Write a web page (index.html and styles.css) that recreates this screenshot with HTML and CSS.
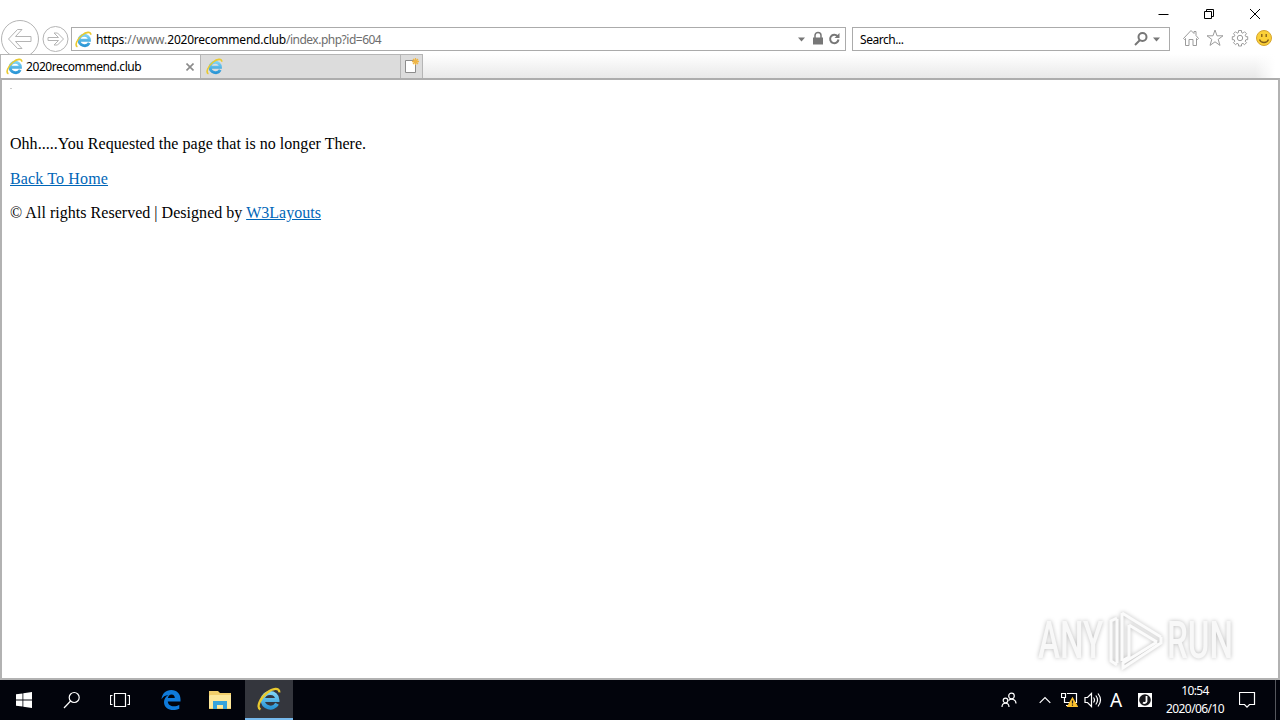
FILE: index.html
```html
<!DOCTYPE html>
<html lang="en">
<head>
    <meta charset="UTF-8">
    <meta name="viewport" content="width=device-width, initial-scale=1.0">
    <title>2020recommend.club</title>
    <link rel="stylesheet" href="styles.css">
</head>
<body>
    <!-- Shared icons -->
    <svg class="defs" width="0" height="0">
        <defs>
            <linearGradient id="ieBlue" x1="0" y1="0" x2="0" y2="1">
                <stop offset="0" stop-color="#7dd3f5"/>
                <stop offset="1" stop-color="#2c97d6"/>
            </linearGradient>
            <symbol id="ie" viewBox="0 0 16 16">
                <path d="M13.400 11.200C10.800 15.800 3.600 13.800 3.900 8.300 4.200 2.600 13.400 2.300 13.600 8.700H5" fill="none" stroke="url(#ieBlue)" stroke-width="2.700"/>
                <path d="M2.300 14.900C-.6 13.600 2 7.600 6.500 4C10.500.8 15 .2 14.900 3.600" fill="none" stroke="#e9c92f" stroke-width="1.500"/>
            </symbol>
        </defs>
    </svg>

    <div class="browser">
        <div class="titlebar">
            <svg class="win-btn" width="46" height="27" viewBox="0 0 46 27"><path d="M18.500 14.500h10"/></svg>
            <svg class="win-btn" width="46" height="27" viewBox="0 0 46 27"><path d="M18.500 11.500h7v7h-7zM20.500 11.500v-2h7v7h-2"/></svg>
            <svg class="win-btn" width="46" height="27" viewBox="0 0 46 27"><path d="M18 9l10 10M28 9l-10 10"/></svg>
        </div>

        <div class="nav">
            <svg class="back" width="40" height="38" viewBox="0 0 40 38">
                <circle cx="20" cy="19" r="18.500"/>
                <path d="M8.500 19l9-9.500h4.500l-6.500 7h15.500v5h-15.500l6.500 7h-4.500z"/>
            </svg>
            <svg class="forward" width="27" height="26" viewBox="0 0 27 26">
                <circle cx="13.500" cy="13" r="12.500"/>
                <path d="M21.500 13l-6-6h-3.500l4.500 4.500h-10.500v3h10.500l-4.500 4.500h3.500z"/>
            </svg>
            <div class="address">
                <svg width="17" height="17"><use href="#ie"/></svg>
                <span class="url">https<span class="www">://www.</span>2020recommend.club<span class="path">/index.php?id=604</span></span>
                <svg class="address-icons" width="46" height="22" viewBox="0 0 46 22">
                    <path d="M0 9.500h7l-3.500 4z"/>
                    <path d="M15 9.500h10v7h-10z"/>
                    <path d="M17 10v-2.500a3 3 0 0 1 6 0v2.500" class="line"/>
                    <path d="M39.500 8.200a4.200 4.200 0 1 0 1 3.300" class="line thick"/>
                    <path d="M41.500 5v5h-5z"/>
                </svg>
            </div>
            <div class="search">
                <span>Search...</span>
                <svg width="28" height="22" viewBox="0 0 28 22">
                    <circle cx="8.500" cy="9" r="4" class="line thick"/>
                    <path d="M6 12l-5 5" class="line thick"/>
                    <path d="M19 9.500h7l-3.500 4z"/>
                </svg>
            </div>
            <div class="tools">
                <svg width="18" height="18" viewBox="0 0 18 18"><path d="M1.500 9.500l7.500-8 3 3v-2h2v4l2.500 3-1 1-1-1v7h-3.500v-6h-4v6h-3.500v-7l-1 1z"/></svg>
                <svg width="18" height="18" viewBox="0 0 18 18"><path d="M9 1l2 5.800h6l-4.800 3.600 1.800 6-5-3.600-5 3.600 1.800-6L1 6.800h6z"/></svg>
                <svg width="18" height="18" viewBox="0 0 18 18">
                    <path d="M7.500 1.500h3v2l1.500.7 1.500-1.500 2 2-1.300 1.500.7 1.500h1.800v3h-1.800l-.7 1.500 1.300 1.500-2 2-1.500-1.300-1.500.6v2h-3v-2L6 14.400l-1.500 1.300-2-2 1.300-1.500-.7-1.500H1.300v-3h1.800l.7-1.500L2.500 4.700l2-2L6 4.200l1.500-.7z"/>
                    <circle cx="9" cy="9" r="2.700"/>
                </svg>
                <svg class="smiley" width="18" height="18" viewBox="0 0 18 18">
                    <circle cx="9" cy="9" r="7.500"/>
                    <path d="M6.800 5v3M11.200 5v3M4.500 10.500c1.500 4 7.500 4 9 0"/>
                </svg>
            </div>
        </div>

        <div class="tabs">
            <div class="tab active">
                <svg width="17" height="17"><use href="#ie"/></svg>
                <span>2020recommend.club</span>
                <svg class="close" width="8" height="8" viewBox="0 0 8 8"><path d="M.5.5l7 7M7.500.5l-7 7"/></svg>
            </div>
            <div class="tab">
                <svg width="17" height="17"><use href="#ie"/></svg>
            </div>
            <div class="new-tab">
                <svg width="16" height="18" viewBox="0 0 16 18">
                    <path d="M1.500 3.500h10v12h-10z" fill="#fff" stroke="#8c8c8c"/>
                    <path d="M11.500 1v7M8 4.500h7M9 2l5 5M14 2l-5 5" stroke="#efb544" stroke-width="1.300"/>
                </svg>
            </div>
        </div>

        <div class="page">
            <div class="dot"></div>
            <p>Ohh.....You Requested the page that is no longer There.</p>
            <p class="home"><a href="#">Back To Home</a></p>
            <p>© All rights Reserved | Designed by <a href="#">W3Layouts</a></p>
        </div>
    </div>

    <div class="watermark">
        <span>ANY</span>
        <svg width="60" height="66" viewBox="0 0 60 66">
            <path d="M15 5v48M15 5l39 24M22 17l28 17M15 53l7-4V17M54 29v6L16 60v-5l34-21M10 10l-6 3v40l6 4M10 11v44"/>
        </svg>
        <span>RUN</span>
    </div>

    <div class="taskbar">
        <div class="task"><svg width="16" height="16" viewBox="0 0 16 16" fill="#fff"><path d="M0 2.300l6.500-.9v6.200H0zM7.300 1.300L16 0v7.600H7.300zM0 8.400h6.500v6.200L0 13.700zM7.300 8.400H16V16l-8.700-1.300z"/></svg></div>
        <div class="task"><svg width="18" height="18" viewBox="0 0 18 18" class="stroke"><circle cx="11.200" cy="6.500" r="5"/><path d="M7.600 10l-6.600 7"/></svg></div>
        <div class="task"><svg width="20" height="16" viewBox="0 0 20 16" class="stroke"><path d="M4.500 1.500h11v13h-11zM2.500 3.500h-2v9h2M17.500 3.500h2v9h-2"/></svg></div>
        <div class="task edge">
            <svg width="20" height="20" viewBox="0 0 20 20"><path d="M.5 9.200C1 3.700 4.800 0 10.300 0c5.800 0 9.200 4 9.200 9.200v2.300H6.800c.2 3.200 2.800 4.800 6 4.800 2 0 3.800-.5 5.500-1.500v4c-1.800.9-4 1.300-6.300 1.300-5.500 0-9-3.200-9-8 0-3.200 1.700-5.800 4.500-7.200C4 5.300 1.900 6.700.5 9.200zM6.900 8.100h6.900c0-2.300-1.100-3.700-3.200-3.700-2 0-3.400 1.400-3.700 3.700z" fill="#0f7bdb"/></svg>
        </div>
        <div class="task explorer">
            <svg width="22" height="18" viewBox="0 0 22 18">
                <path d="M0 0h9l2 2h11v16H0z" fill="#f2cf6b"/>
                <path d="M1 4h21v13H0V5z" fill="#fde89b"/>
                <path d="M4 18v-8h14v8h-4v-4H8v4z" fill="#35a3dc"/>
            </svg>
        </div>
        <div class="task current"><svg width="24" height="24"><use href="#ie"/></svg></div>

        <div class="tray">
            <svg class="people stroke" width="16" height="16" viewBox="0 0 16 16"><circle cx="10.500" cy="4" r="2.800"/><circle cx="4.500" cy="8.500" r="2.300"/><path d="M1 15c0-5 7-5 7 0M7.500 8.500c3-3 7.500-.5 7.500 3"/></svg>
            <svg class="chevron stroke" width="12" height="8" viewBox="0 0 12 8"><path d="M.7 6.800L6 1.500l5.300 5.300"/></svg>
            <svg class="network stroke" width="17" height="16" viewBox="0 0 17 16">
                <path d="M.5 1.500h4v4h-4zM6 1.500h9.500v9H3.500V6M5 13.500h6"/>
                <path d="M11.500 6l4.800 8.500H6.700z" fill="#fbc12e" stroke="#fbc12e"/>
                <path d="M11.500 8.500v3M11.500 12.500v1.300" stroke="#222"/>
            </svg>
            <svg class="volume stroke" width="18" height="16" viewBox="0 0 18 16"><path d="M1 5.500h2.500l4-4v13l-4-4H1zM9.500 5.500q2 2.500 0 5M11.800 3.500q3.500 4.500 0 9M14 1.500q5 6.500 0 13"/></svg>
            <span class="ime">A</span>
            <svg class="ime-mode" width="14" height="14" viewBox="0 0 14 14">
                <rect width="14" height="14" fill="#fff"/>
                <circle cx="7" cy="7" r="5.800" fill="#15151a"/>
                <path d="M8.500 3v5.500a2.200 2.200 0 0 1-3.500 1" fill="none" stroke="#fff" stroke-width="1.800"/>
            </svg>
            <div class="clock"><span>10:54</span><span>2020/06/10</span></div>
            <svg class="notify stroke" width="17" height="17" viewBox="0 0 17 17"><path d="M.5.5h15v12h-5l-2.500 2.700-2.500-2.700h-5z"/></svg>
        </div>
    </div>
</body>
</html>
```
FILE: styles.css
```css
* {
    box-sizing: border-box;
}
body {
    margin: 0;
    width: 1280px;
    height: 720px;
    display: flex;
    flex-direction: column;
    overflow: hidden;
    background: #fff;
    font-family: "Noto Sans", sans-serif;
    font-size: 12px;
    color: #000;
}
svg {
    display: block;
    flex: none;
}
.defs {
    position: absolute;
}
.browser {
    height: 680px;
    display: flex;
    flex-direction: column;
}

/* Window buttons */
.titlebar {
    height: 27px;
    display: flex;
    justify-content: flex-end;
    padding-right: 2px;
}
.win-btn {
    fill: none;
    stroke: #000;
}

/* Navigation row */
.nav {
    height: 27px;
    display: flex;
    align-items: flex-start;
}
.back,
.forward {
    fill: #fff;
    stroke: #b4b4b4;
}
.back {
    margin-top: -7px;
}
.forward {
    margin: -1px 0 0 2px;
}
.address,
.search {
    height: 24px;
    display: flex;
    align-items: center;
    border: 1px solid #ababab;
}
.address {
    width: 775px;
    margin-left: 2px;
    padding: 0 1px 0 3px;
}
.url {
    margin-left: 4px;
    white-space: nowrap;
    letter-spacing: -0.23px;
}
.www,
.path {
    color: #6d6d6d;
}
.www {
    letter-spacing: 0;
}
.path {
    letter-spacing: -0.5px;
}
.address-icons {
    margin-left: auto;
}
.address-icons,
.search svg {
    fill: #777;
}
.nav .line {
    fill: none;
    stroke: #777;
    stroke-width: 1.5;
}
.nav .thick {
    stroke-width: 2;
}
.search {
    width: 318px;
    margin-left: 6px;
    padding: 0 7px;
    justify-content: space-between;
    letter-spacing: -0.45px;
}
.tools {
    display: flex;
    gap: 6.5px;
    margin: 2px 0 0 11.5px;
}
.tools svg {
    fill: #fff;
    stroke: #9b9b9b;
}
.tools .smiley circle {
    fill: #fbd038;
    stroke: #d6a531;
}
.tools .smiley path {
    fill: none;
    stroke: #805b17;
    stroke-width: 1.3;
}

/* Tabs */
.tabs {
    position: relative;
    height: 24px;
    display: flex;
    background: linear-gradient(to right, transparent 1255px, #fff 1275px), linear-gradient(#fff, #e9e9e9);
}
.tab {
    width: 200px;
    display: flex;
    align-items: center;
    padding: 0 6px 0 5px;
    border: 1px solid #b5b5b5;
    border-width: 1px 0 0 1px;
    background: #dcdcdc;
}
.tab.active {
    background: #fff;
}
.tab span {
    margin-left: 3px;
    letter-spacing: -0.42px;
}
.close {
    margin-left: auto;
    stroke: #8b8b8b;
    stroke-width: 1.6;
}
.new-tab {
    width: 23px;
    padding: 2px 0 0 3px;
    border: 1px solid #b5b5b5;
    border-width: 1px 1px 0 1px;
    background: #dcdcdc;
}

/* Page */
.page {
    flex: 1;
    border: 2px solid #b2b2b2;
    border-top-color: #adadad;
    padding: 8px 8px 0;
    font-family: "Liberation Serif", serif;
    font-size: 16px;
    line-height: 18px;
    letter-spacing: 0.03px;
}
.dot {
    width: 2px;
    height: 1px;
    margin-bottom: 46px;
    background: #ccc;
}
.page p {
    margin: 0 0 17px;
}
.page .home {
    margin-bottom: 16px;
    letter-spacing: 0.14px;
}
.page a {
    color: #0066b8;
}

/* Watermark */
.watermark {
    position: absolute;
    left: 1038px;
    top: 608px;
    display: flex;
    align-items: center;
    filter: drop-shadow(0 0 2px #bbb);
}
.watermark span {
    width: 66px;
    font: 500 51px/66px "Roboto", sans-serif;
    color: #f8f8f8;
    transform: scaleX(0.65);
    transform-origin: left;
}
.watermark svg {
    margin-left: 3px;
    fill: none;
    stroke: #fbfbfb;
    stroke-width: 3;
}

/* Taskbar */
.taskbar {
    height: 40px;
    display: flex;
    background: #02040c;
    color: #fff;
}
.task {
    width: 48px;
    display: flex;
    align-items: center;
    justify-content: center;
}
.task.edge {
    margin-left: 3px;
}
.task.explorer {
    width: 50px;
}
.task.current {
    background: #34363d;
    border-bottom: 2px solid #76b9ed;
}
.stroke {
    fill: none;
    stroke: #fff;
    stroke-width: 1.2;
}
.tray {
    margin-left: auto;
    display: flex;
    align-items: center;
    padding-right: 4px;
    border-right: 1px solid #55575d;
    margin-right: 4px;
}
.chevron {
    margin-left: 22px;
}
.network {
    margin-left: 10px;
}
.volume {
    margin-left: 6px;
}
.ime {
    width: 18px;
    margin-left: 5px;
    font-size: 19px;
    text-align: center;
}
.ime-mode {
    margin-left: 13px;
}
.clock {
    width: 60px;
    margin-left: 13px;
    display: flex;
    flex-direction: column;
    align-items: center;
    line-height: 18px;
    letter-spacing: -0.6px;
}
.notify {
    margin: 1px 15px 0 14px;
}
```
